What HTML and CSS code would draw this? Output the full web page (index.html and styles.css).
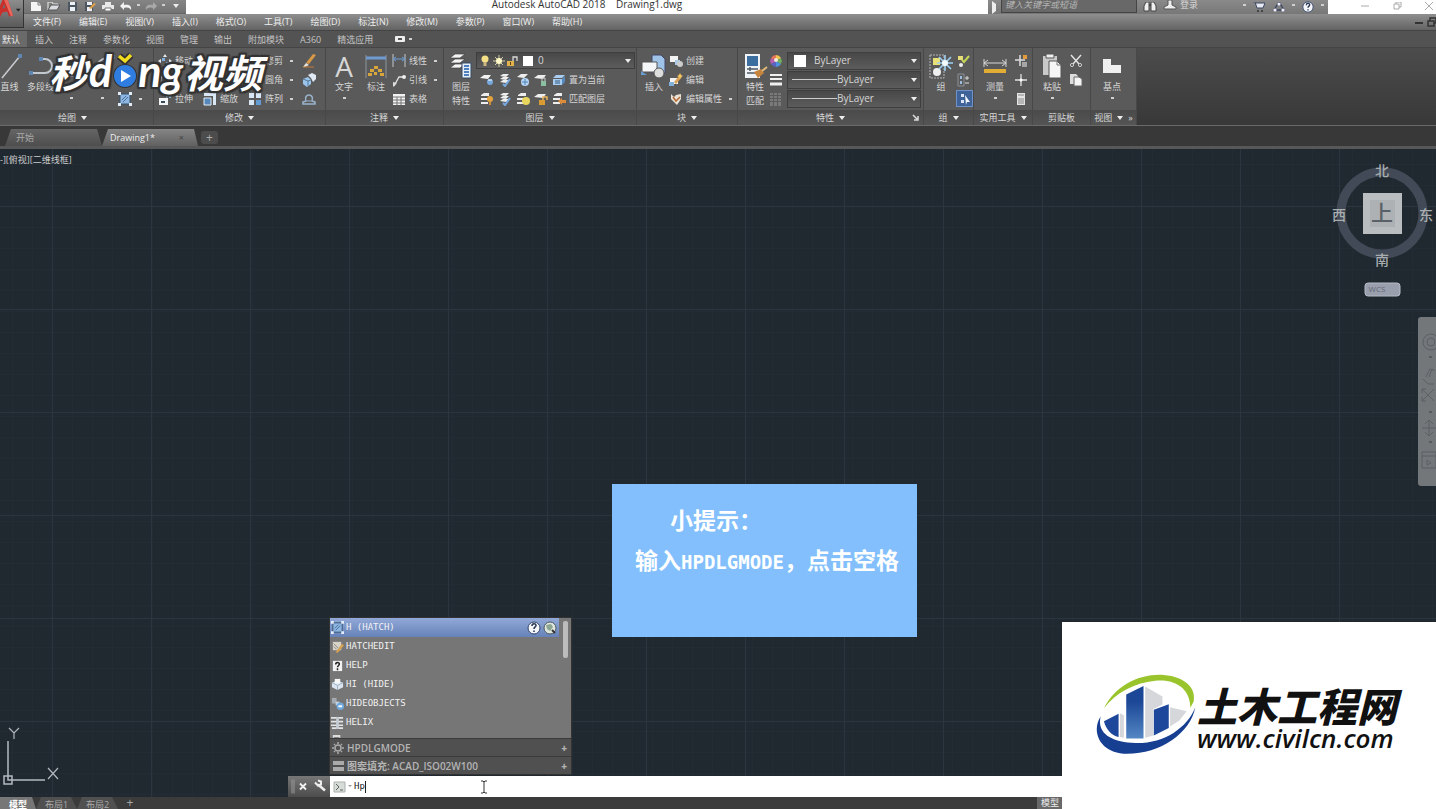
FILE: index.html
```
<!doctype html>
<html lang="zh-CN">
<head>
	<meta charset="utf-8">
	<title>Autodesk AutoCAD 2018</title>
	<link rel="stylesheet" href="styles.css">
</head>
<body>
	<svg class="symbols" aria-hidden="true">
		<symbol id="new" viewBox="0 0 14 10"><path d="M2 0h7l3 3v6H2z" fill="#f4f4f4"/><path d="M9 0v3h3" fill="none" stroke="#777"/></symbol>
		<symbol id="open" viewBox="0 0 14 10"><path d="M1 8V0h4l1 2h5v2" fill="none" stroke="#eee"/><path d="M1 8l3-5h9l-3 5z" fill="#d9dde2" stroke="#555"/></symbol>
		<symbol id="save" viewBox="0 0 14 10"><path d="M3 0h9v9H3z" fill="#4c5661"/><path d="M5 0h5v3H5zM5 5h5v4H5z" fill="#eef2f6"/></symbol>
		<symbol id="saveas" viewBox="0 0 14 10"><path d="M2 0h8v9H2z" fill="#4c5661"/><path d="M4 0h5v3H4zM4 5h5v4H4z" fill="#eef2f6"/><path d="M6 6l5-5 2 1-5 5z" fill="#e0a04a"/></symbol>
		<symbol id="print" viewBox="0 0 14 10"><path d="M4 0h6v3H4zM1 3h12v4H1z" fill="#e9e9e9"/><path d="M4 6h6v3H4z" fill="#fff" stroke="#777"/></symbol>
		<symbol id="undo" viewBox="0 0 14 10"><path d="M1 4l4-4v3c5-1 8 1 7 5-1-2-3-3-7-2v2z" fill="#f2f2f2"/></symbol>
		<symbol id="redo" viewBox="0 0 14 10"><path d="M13 4L9 0v3C4 2 1 4 2 8c1-2 3-3 7-2v2z" fill="#a9a9a9"/></symbol>
		<symbol id="line" viewBox="0 0 26 26"><path d="M5 25L23 3" stroke="#c9cdd1" stroke-width="1.5"/><path d="M21 1h4v4h-4z" fill="#5f86b3"/></symbol>
		<symbol id="pline" viewBox="0 0 26 26"><path d="M3 20h14a7 7 0 0 0 0-14h-4" fill="none" stroke="#c3c9d0" stroke-width="2"/><path d="M1 18h4v4H1zM11 4h4v4h-4z" fill="#5f86b3"/></symbol>
		<symbol id="circle" viewBox="0 0 26 26"><circle cx="13" cy="13" r="10" fill="none" stroke="#c3c9d0" stroke-width="2"/><path d="M11 11h4v4h-4z" fill="#5f86b3"/></symbol>
		<symbol id="arc" viewBox="0 0 26 26"><path d="M3 23C4 10 12 4 23 4" fill="none" stroke="#c3c9d0" stroke-width="2"/><path d="M1 21h4v4H1zM21 2h4v4h-4z" fill="#5f86b3"/></symbol>
		<symbol id="hatch" viewBox="0 0 14 14"><path d="M2 2h10v10H2z" fill="#8fb6e0" stroke="#33506f"/><path d="M0 0h3v3H0zM11 0h3v3h-3zM0 11h3v3H0zM11 11h3v3h-3z" fill="#e3edf8"/><path d="M4 8l4-4M5 10l5-5" stroke="#47729f"/></symbol>
		<symbol id="move" viewBox="0 0 14 14"><path d="M7 0l2 3H5zM7 14l2-3H5zM0 7l3-2v4zM14 7l-3-2v4z" fill="#e4eaf0"/><path d="M4 4h3v3H4zM8 8h3v3H8z" fill="#7eb0df"/></symbol>
		<symbol id="rotate" viewBox="0 0 14 14"><path d="M11 4a5 5 0 1 0 1 5" fill="none" stroke="#e4eaf0" stroke-width="2"/><path d="M8 4h5V0z" fill="#8db8e2"/></symbol>
		<symbol id="stretch" viewBox="0 0 14 14"><path d="M1 6h9v7H1z" fill="#f1f4f7"/><path d="M3 9h4v2H3z" fill="#394a5a"/><path d="M8 1h5v5h-2V4L8 6z" fill="#91badf"/></symbol>
		<symbol id="scale" viewBox="0 0 14 14"><path d="M1 1h12v12h-3V4H1z" fill="#d9e7f5"/><path d="M1 6h7v7H1z" fill="#5688bb" stroke="#e4edf6"/></symbol>
		<symbol id="array" viewBox="0 0 14 14"><path d="M1 1h5v5H1zM8 1h5v5H8zM1 8h5v5H1z" fill="#d8e7f6"/><path d="M8 8h5v5H8z" fill="#629bd3"/></symbol>
		<symbol id="erase" viewBox="0 0 14 14"><path d="M4 9l7-9 3 1-7 9z" fill="#d89845"/><path d="M4 9l3 2-4 2H1z" fill="#e8e4de"/><path d="M1 13h11" stroke="#c27b38"/></symbol>
		<symbol id="explode" viewBox="0 0 14 14"><path d="M1 6l5-2 3 3v4l-4 3-4-3z" fill="#9cc5ec"/><path d="M6 2l4-2 4 2v4l-3 3-2-4z" fill="#dfeaf5"/><path d="M1 6l5 2 3-1M6 8v5" fill="none" stroke="#54789a"/></symbol>
		<symbol id="offset" viewBox="0 0 14 14"><path d="M1 12h12v-2l-3-1c3-8-9-8-6 0l-3 1z" fill="none" stroke="#9bb5cf" stroke-width="1.5"/><path d="M5 9h4" stroke="#9bb5cf"/></symbol>
		<symbol id="dim" viewBox="0 0 26 26"><path d="M3 2v23M23 2v23" stroke="#8c969f"/><path d="M3 5h20" stroke="#6f9bd1" stroke-width="3"/><path d="M11 13h4v3h-4zM7 16h4v3H7zM15 16h4v3h-4zM5 20h4v3H5zM17 20h4v3h-4zM11 19h3v3h-3z" fill="#d9a63b"/></symbol>
		<symbol id="linear" viewBox="0 0 14 14"><path d="M1 0v13M13 0v13" stroke="#c3c9ce"/><path d="M1 5h12M4 3L1 5l3 2M10 3l3 2-3 2" fill="none" stroke="#6d9ed6"/></symbol>
		<symbol id="leader" viewBox="0 0 14 14"><path d="M2 13L7 4h4" fill="none" stroke="#e3e3e3" stroke-width="1.3"/><path d="M1 9l4 1-4 4z" fill="#ddd"/><circle cx="12" cy="4" r="2" fill="#eee"/></symbol>
		<symbol id="table" viewBox="0 0 14 14"><path d="M1 2h12v11H1z" fill="#f2f2f2"/><path d="M1 5h12M1 8h12M1 11h12M5 5v8M9 5v8" stroke="#777"/></symbol>
		<symbol id="layers" viewBox="0 0 26 26"><path d="M2 5l5-4h10l-5 4zM2 10l5-4h10l-5 4zM2 15l5-4h10l-5 4z" fill="#f4f4f4" stroke="#444" stroke-width=".7"/><path d="M14 10h9v15h-9z" fill="#e6effa" stroke="#374d65"/><path d="M16 13h5M16 16h5M16 19h5M16 22h5" stroke="#4d80bd" stroke-width="2"/></symbol>
		<symbol id="lay-a" viewBox="0 0 14 14"><path d="M0 5l4-3h7L8 6z" fill="#f2f2f2"/><circle cx="10" cy="9" r="3" fill="#76a8de"/><path d="M8 7h4" stroke="#fff"/></symbol>
		<symbol id="lay-b" viewBox="0 0 14 14"><path d="M2 3l3-2h6L8 4zM2 6l3-2h6L8 7zM2 9l3-2h6l-3 3z" fill="#eee"/><path d="M5 11l2 2 5-7" fill="none" stroke="#77a9e0" stroke-width="2"/></symbol>
		<symbol id="lay-c" viewBox="0 0 14 14"><path d="M1 4l4-3h7L8 5z" fill="#eee"/><circle cx="9" cy="9" r="4" fill="#b5d5f4"/><path d="M6 9h6M9 6v6" stroke="#4f81b6"/></symbol>
		<symbol id="lay-d" viewBox="0 0 14 14"><path d="M0 5l4-3h8L9 6z" fill="#eee"/><path d="M7 8h5v5H7z" fill="#8ac0a1"/><path d="M8 8V5h3v3" fill="none" stroke="#ccc"/></symbol>
		<symbol id="lay-e" viewBox="0 0 14 14"><path d="M1 5l3-3h9l-3 3zM1 6h9v6H1z" fill="#a9cdf1"/><path d="M10 6l3-3v6l-3 3z" fill="#5889bd"/><path d="M3 8h5M3 10h5" stroke="#35587c"/></symbol>
		<symbol id="lay-f" viewBox="0 0 14 14"><path d="M1 3l3-2h5v3H1zM1 6h7v2H1zM1 10h7v2H1z" fill="#eee"/><circle cx="10" cy="7" r="3" fill="#e3a43d"/><path d="M9 10h2v3H9z" fill="#c9893c"/></symbol>
		<symbol id="lay-g" viewBox="0 0 14 14"><path d="M2 3l3-2h5v3H2zM1 6h7v2H1zM1 10h7v2H1z" fill="#eee"/><circle cx="10" cy="9" r="4" fill="#e8d55d"/></symbol>
		<symbol id="lay-h" viewBox="0 0 14 14"><path d="M0 5l4-3h8L9 6z" fill="#eee"/><path d="M5 8h6v5H5z" fill="#d99b32"/><path d="M9 8V5h4v3" fill="none" stroke="#e9b35b" stroke-width="1.5"/></symbol>
		<symbol id="lay-i" viewBox="0 0 14 14"><path d="M2 3l3-2h5v3H2zM1 6h7v2H1zM1 10h7v2H1z" fill="#eee"/><path d="M6 9l4-3v2h4v3h-4v2z" fill="#dd8c3c"/></symbol>
		<symbol id="bulb" viewBox="0 0 14 14"><circle cx="7" cy="5" r="3.5" fill="#f5df87"/><path d="M5.500 8h3v4h-3z" fill="#ccb980"/></symbol>
		<symbol id="sun" viewBox="0 0 14 14"><path d="M7 1v12M1 7h12M3 3l8 8M11 3l-8 8" stroke="#d0cba0"/><circle cx="7" cy="7" r="3" fill="#fffac8"/></symbol>
		<symbol id="lock" viewBox="0 0 14 14"><path d="M1 7h7v5H1z" fill="#e3b34b"/><path d="M7 7V3h4v4" fill="none" stroke="#d8d8d8" stroke-width="1.3"/><path d="M4 8h1v3H4z" fill="#5c461b"/></symbol>
		<symbol id="insert" viewBox="0 0 26 26"><path d="M11 2h9l4 4v14H11z" fill="#9fc3e8" stroke="#446"/><path d="M1 9h15v10H1z" fill="#f5f6f7" stroke="#555"/><circle cx="18" cy="20" r="5" fill="#ddd" stroke="#555"/><path d="M0 18l6 4H0z" fill="#699dd1"/></symbol>
		<symbol id="create" viewBox="0 0 14 14"><path d="M1 2h8v6H1z" fill="#f3f3f3"/><path d="M6 6h5v5H6z" fill="#a9c9e7"/><circle cx="11" cy="10" r="3" fill="#ccc"/></symbol>
		<symbol id="edit" viewBox="0 0 14 14"><path d="M1 5h8v6H1z" fill="#f3f3f3"/><path d="M5 9l5-6 3 1-6 7z" fill="#d9a159"/><path d="M0 9h5v4H0z" fill="#83b0db"/><path d="M11 0l1 2 2 1-2 1-1 2-1-2-2-1 2-1z" fill="#f4c85e"/></symbol>
		<symbol id="attr" viewBox="0 0 14 14"><path d="M2 2l3 3 2-2 5-1v5l-4 6-6-6z" fill="#e9e2d5"/><path d="M4 5l3 4 4-4" fill="none" stroke="#b66d38" stroke-width="1.5"/></symbol>
		<symbol id="match" viewBox="0 0 26 26"><path d="M3 1h15v24H3z" fill="#f0f3f6"/><path d="M5 3h11v10H5z" fill="#3c6d9f"/><path d="M5 16h11M5 20h9M8 14v4" stroke="#4d5964" stroke-width="1.5"/><path d="M12 19l7-3 3 4-6 5z" fill="#c7843c"/><path d="M20 18l5-4" stroke="#e0bb78" stroke-width="2"/></symbol>
		<symbol id="wheel" viewBox="0 0 14 14"><path d="M7 7L2 4a6 6 0 0 1 5-3z" fill="#e57558"/><path d="M7 7V1a6 6 0 0 1 5 3z" fill="#f0c34d"/><path d="M7 7l5-3a6 6 0 0 1 0 6z" fill="#72b15b"/><path d="M7 7l5 3a6 6 0 0 1-5 3z" fill="#4e93dc"/><path d="M7 7v6a6 6 0 0 1-5-3z" fill="#5a63c2"/><path d="M7 7l-5 3a6 6 0 0 1 0-6z" fill="#b95fb0"/><circle cx="7" cy="6" r="2" fill="#f3e9e0"/></symbol>
		<symbol id="weights" viewBox="0 0 14 14"><path d="M1 2h12M1 6h12" stroke="#f0f0f0" stroke-width="2"/><path d="M1 11h12" stroke="#f0f0f0" stroke-width="3"/></symbol>
		<symbol id="types" viewBox="0 0 14 14"><path d="M1 2h12M1 5h12M1 8h12M1 11h12M1 13h12" stroke="#999" stroke-dasharray="3 1"/></symbol>
		<symbol id="group" viewBox="0 0 26 26"><path d="M2 2h14v23H2z" fill="none" stroke="#b6b6b6" stroke-dasharray="2 1"/><path d="M5 5h7v7H5z" fill="#e8df76"/><circle cx="9" cy="19" r="4" fill="#f0f0f0"/><path d="M17 2v16M9 10h16M11 4l12 12M23 4L11 16" stroke="#9ed0f4" stroke-width="1.6"/><circle cx="17" cy="10" r="3" fill="#f4fbff"/></symbol>
		<symbol id="ungroup" viewBox="0 0 14 14"><path d="M2 2h5v4H2z" fill="#e5dd78"/><circle cx="5" cy="11" r="2" fill="#eee"/><path d="M6 6l2 2 5-6" fill="none" stroke="#c6d756" stroke-width="2"/></symbol>
		<symbol id="gredit" viewBox="0 0 14 14"><path d="M2 1h6v12H2z" fill="none" stroke="#8b9196"/><path d="M4 3h2v3H4zM4 8h2v3H4z" fill="#9cbde0"/><path d="M9 5h4M11 3v4M9 10h4" stroke="#ddd"/></symbol>
		<symbol id="grsel" viewBox="0 0 14 14"><path d="M3 2h3v3H3zM3 8h3v3H3z" fill="#d9e6f7"/><path d="M7 3l5 7H9l-1 3z" fill="#f3f6fa"/></symbol>
		<symbol id="measure" viewBox="0 0 26 26"><path d="M2 6v8M24 6v8M2 10h22M6 7l-4 3 4 3M20 7l4 3-4 3" fill="none" stroke="#d6d6d6"/><path d="M2 16h22v4H2z" fill="#e1ad35"/></symbol>
		<symbol id="quick" viewBox="0 0 14 14"><path d="M6 1v11M1 6h10" stroke="#ddd" stroke-width="1.5"/><path d="M9 1h4v4H9z" fill="#e29b3e"/><path d="M8 8h5v5H8z" fill="#a6a6a6"/></symbol>
		<symbol id="point" viewBox="0 0 14 14"><path d="M7 1v12M1 7h12" stroke="#e0e0e0" stroke-width="1.3"/><circle cx="7" cy="7" r="1.5" fill="#fff"/></symbol>
		<symbol id="calc" viewBox="0 0 14 14"><path d="M3 1h8v12H3z" fill="#e3e3e3"/><path d="M4 3h6M4 7h6M4 9h6M4 11h6" stroke="#888"/></symbol>
		<symbol id="paste" viewBox="0 0 26 26"><path d="M4 3h14v19H4z" fill="#c9c9c9"/><path d="M7 1h8v4H7z" fill="#eee" stroke="#555"/><path d="M10 8h8l4 4v13H10z" fill="#f5f5f5" stroke="#555"/><path d="M18 8v4h4" fill="none" stroke="#777"/></symbol>
		<symbol id="cut" viewBox="0 0 14 14"><path d="M2 1l8 9M12 1l-8 9" stroke="#e5e5e5" stroke-width="1.4"/><circle cx="3" cy="11" r="1.6" fill="none" stroke="#ccc"/><circle cx="11" cy="11" r="1.6" fill="none" stroke="#ccc"/></symbol>
		<symbol id="copy" viewBox="0 0 14 14"><path d="M1 1h6l2 2v8H1z" fill="#ddd"/><path d="M5 4h5l3 2v7H5z" fill="#f5f5f5" stroke="#666"/></symbol>
		<symbol id="base" viewBox="0 0 26 26"><path d="M4 6h8v6h10v8H4z" fill="#f0f0f0"/></symbol>
		<symbol id="binoculars" viewBox="0 0 14 10"><path d="M3 0h3v9H1V4zM8 0h3l2 4v5H8z" fill="#f0f0f0" stroke="#444"/><path d="M6 3h2" stroke="#444" stroke-width="2"/></symbol>
		<symbol id="user" viewBox="0 0 14 10"><path d="M5 0h4v5l4 2v2H1V7l4-2z" fill="#eee" stroke="#555"/></symbol>
		<symbol id="cart" viewBox="0 0 14 10"><path d="M1 0h2l2 6h6l2-5H4" fill="#e6e9f1" stroke="#3d4561"/><circle cx="6" cy="9" r="1" fill="#333"/><circle cx="10" cy="9" r="1" fill="#333"/></symbol>
		<symbol id="share" viewBox="0 0 14 10"><path d="M7 0L2 8h10z" fill="none" stroke="#3d4561" stroke-width="1.4"/><circle cx="7" cy="2" r="1.6" fill="#eef"/><circle cx="3" cy="8" r="1.6" fill="#eef"/><circle cx="11" cy="8" r="1.6" fill="#eef"/></symbol>
		<symbol id="qmark" viewBox="0 0 14 14"><circle cx="7" cy="7" r="6" fill="#f4f6f9" stroke="#34466b"/><path d="M5 5c0-3 4-3 4-.5C9 6 7 6 7 8M7 9.500v1.500" fill="none" stroke="#2c3a57" stroke-width="1.6"/></symbol>
		<symbol id="web" viewBox="0 0 14 14"><circle cx="7" cy="7" r="6" fill="#dfe7dd" stroke="#4b5a66"/><path d="M3 4l5-1 2 3-3 4-3-2z" fill="#8da592"/><path d="M9 9l3 3" stroke="#333" stroke-width="2"/></symbol>
	</svg>

	<header class="titlebar">
		<div class="quick">
			<button aria-label="新建"><svg><use href="#new"/></svg></button>
			<button aria-label="打开"><svg><use href="#open"/></svg></button>
			<button aria-label="保存"><svg><use href="#save"/></svg></button>
			<button aria-label="另存为"><svg><use href="#saveas"/></svg></button>
			<button aria-label="打印"><svg><use href="#print"/></svg></button>
			<button aria-label="放弃"><svg><use href="#undo"/></svg></button>
			<i class="dot"></i>
			<button aria-label="重做"><svg><use href="#redo"/></svg></button>
			<i class="dot"></i>
			<i class="caret"></i>
		</div>
		<h1>Autodesk AutoCAD 2018 &nbsp;&nbsp; Drawing1.dwg</h1>
		<div class="info">
			<i class="caret side"></i>
			<input type="text" aria-label="搜索" placeholder="键入关键字或短语">
			<button aria-label="搜索"><svg><use href="#binoculars"/></svg></button>
			<button class="login"><svg><use href="#user"/></svg>登录</button>
			<i class="dot"></i>
			<button aria-label="应用商店"><svg><use href="#cart"/></svg></button>
			<button aria-label="保持连接"><svg><use href="#share"/></svg></button>
			<i class="dot"></i>
			<button class="help" aria-label="帮助"><svg><use href="#qmark"/></svg></button>
			<i class="dot"></i>
		</div>
		<div class="window-buttons">
			<button aria-label="最小化"><svg viewBox="0 0 10 10"><path d="M1 4h8" stroke="#aaa"/></svg></button>
			<button aria-label="还原"><svg viewBox="0 0 10 10"><path d="M2 2h5v5H2zM4 2V0h5v5H7" fill="none" stroke="#aaa"/></svg></button>
			<button aria-label="关闭"><svg viewBox="0 0 10 10"><path d="M1 0l8 8M9 0L1 8" stroke="#aaa"/></svg></button>
		</div>
	</header>
	<button class="app-button" aria-label="应用程序菜单">
		<svg viewBox="0 0 24 28"><path d="M-6 19L3-2h4l6 18-4 1-2-5-5 1-3 6z" fill="#c9302b"/><path d="M3-2l4 0 6 18-2 1z" fill="#e8685d"/><path d="M2 9l3-1-1-4z" fill="#6d6d6d"/><path d="M16 9h5l-2.500 3z" fill="#222"/></svg>
	</button>

	<nav class="menubar">
		<a href="#">文件(F)</a>
		<a href="#">编辑(E)</a>
		<a href="#">视图(V)</a>
		<a href="#">插入(I)</a>
		<a href="#">格式(O)</a>
		<a href="#">工具(T)</a>
		<a href="#">绘图(D)</a>
		<a href="#">标注(N)</a>
		<a href="#">修改(M)</a>
		<a href="#">参数(P)</a>
		<a href="#">窗口(W)</a>
		<a href="#">帮助(H)</a>
		<svg class="doc-buttons" viewBox="0 0 22 12"><path d="M1 7h8" stroke="#333" stroke-width="2"/><path d="M14 5h6v5h-6zM16 5V2h6v5h-2" fill="none" stroke="#333" stroke-width="1.500"/></svg>
	</nav>

	<nav class="ribbon-tabs">
		<a href="#" class="active">默认</a>
		<a href="#">插入</a>
		<a href="#">注释</a>
		<a href="#">参数化</a>
		<a href="#">视图</a>
		<a href="#">管理</a>
		<a href="#">输出</a>
		<a href="#">附加模块</a>
		<a href="#">A360</a>
		<a href="#">精选应用</a>
		<button aria-label="最小化功能区"><i class="cam"></i><i class="dot"></i></button>
	</nav>

	<section class="ribbon">
		<div class="panel draw">
			<div class="tools">
				<button class="big"><svg><use href="#line"/></svg>直线</button>
				<button class="big"><svg><use href="#pline"/></svg>多段线</button>
				<button class="big bare" aria-label="圆"><svg><use href="#circle"/></svg><i class="dot"></i></button>
				<button class="big bare" aria-label="圆弧"><svg><use href="#arc"/></svg><i class="dot"></i></button>
				<div class="col end">
					<button aria-label="图案填充"><svg><use href="#hatch"/></svg><i class="dot"></i></button>
				</div>
			</div>
			<button class="caption">绘图<i class="caret"></i></button>
		</div>
		<div class="panel modify">
			<div class="tools">
				<div class="col">
					<button>
						<svg><use href="#move"/></svg>移动</button>
					<button aria-label="旋转"><svg><use href="#rotate"/></svg></button>
					<button><svg><use href="#stretch"/></svg>拉伸</button>
				</div>
				<div class="col end">
					<button><svg><use href="#scale"/></svg>缩放</button>
				</div>
				<div class="col">
					<button><svg><use href="#cut"/></svg>修剪<i class="dot"></i></button>
					<button><svg><use href="#arc"/></svg>圆角<i class="dot"></i></button>
					<button><svg><use href="#array"/></svg>阵列<i class="dot"></i></button>
				</div>
				<div class="col">
					<button aria-label="删除"><svg><use href="#erase"/></svg></button>
					<button aria-label="分解"><svg><use href="#explode"/></svg></button>
					<button aria-label="偏移"><svg><use href="#offset"/></svg></button>
				</div>
			</div>
			<button class="caption">修改<i class="caret"></i></button>
		</div>
		<div class="panel annotate">
			<div class="tools">
				<button class="big"><span class="letter">A</span>文字<i class="dot"></i></button>
				<button class="big"><svg><use href="#dim"/></svg>标注</button>
				<div class="col">
					<button><svg><use href="#linear"/></svg>线性<i class="dot"></i></button>
					<button><svg><use href="#leader"/></svg>引线<i class="dot"></i></button>
					<button><svg><use href="#table"/></svg>表格</button>
				</div>
			</div>
			<button class="caption">注释<i class="caret"></i></button>
		</div>
		<div class="panel layer">
			<div class="tools">
				<button class="big"><svg><use href="#layers"/></svg>图层<br>特性</button>
				<div class="col">
					<div class="combo">
						<svg><use href="#bulb"/></svg>
						<svg><use href="#sun"/></svg>
						<svg><use href="#lock"/></svg>
						<i class="swatch"></i>
						<select aria-label="图层"><option>0</option></select>
						<i class="caret"></i>
					</div>
					<div class="row">
						<button aria-label="关"><svg><use href="#lay-a"/></svg></button>
						<button aria-label="隔离"><svg><use href="#lay-b"/></svg></button>
						<button aria-label="冻结"><svg><use href="#lay-c"/></svg></button>
						<button aria-label="锁定"><svg><use href="#lay-d"/></svg></button>
						<button><svg><use href="#lay-e"/></svg>置为当前</button>
					</div>
					<div class="row">
						<button aria-label="打开所有图层"><svg><use href="#lay-f"/></svg></button>
						<button aria-label="取消隔离"><svg><use href="#lay-b"/></svg></button>
						<button aria-label="解冻所有图层"><svg><use href="#lay-g"/></svg></button>
						<button aria-label="解锁"><svg><use href="#lay-h"/></svg></button>
						<button><svg><use href="#lay-i"/></svg>匹配图层</button>
					</div>
				</div>
			</div>
			<button class="caption">图层<i class="caret"></i></button>
		</div>
		<div class="panel block">
			<div class="tools">
				<button class="big"><svg><use href="#insert"/></svg>插入</button>
				<div class="col">
					<button><svg><use href="#create"/></svg>创建</button>
					<button><svg><use href="#edit"/></svg>编辑</button>
					<button><svg><use href="#attr"/></svg>编辑属性<i class="dot"></i></button>
				</div>
			</div>
			<button class="caption">块<i class="caret"></i></button>
		</div>
		<div class="panel props">
			<div class="tools">
				<button class="big"><svg><use href="#match"/></svg>特性<br>匹配</button>
				<div class="col">
					<div class="row"><svg><use href="#wheel"/></svg><div class="combo"><i class="swatch"></i><select aria-label="对象颜色"><option>ByLayer</option></select><i class="caret"></i></div></div>
					<div class="row"><svg><use href="#weights"/></svg><div class="combo"><i class="rule"></i><select aria-label="线宽"><option>ByLayer</option></select><i class="caret"></i></div></div>
					<div class="row"><svg><use href="#types"/></svg><div class="combo"><i class="rule"></i><select aria-label="线型"><option>ByLayer</option></select><i class="caret"></i></div></div>
				</div>
			</div>
			<button class="caption">特性<i class="caret"></i><svg class="launcher" viewBox="0 0 8 8"><path d="M1 1l4 4M6 2v4H2" fill="none" stroke="#ddd" stroke-width="1.500"/></svg></button>
		</div>
		<div class="panel groups">
			<div class="tools">
				<button class="big"><svg><use href="#group"/></svg>组</button>
				<div class="col">
					<button aria-label="解除编组"><svg><use href="#ungroup"/></svg></button>
					<button aria-label="组编辑"><svg><use href="#gredit"/></svg></button>
					<button class="pressed" aria-label="启用组选择"><svg><use href="#grsel"/></svg></button>
				</div>
			</div>
			<button class="caption">组<i class="caret"></i></button>
		</div>
		<div class="panel utils">
			<div class="tools">
				<button class="big"><svg><use href="#measure"/></svg>测量<i class="dot"></i></button>
				<div class="col">
					<button aria-label="快速选择"><svg><use href="#quick"/></svg></button>
					<button aria-label="点"><svg><use href="#point"/></svg></button>
					<button aria-label="计算器"><svg><use href="#calc"/></svg></button>
				</div>
			</div>
			<button class="caption">实用工具<i class="caret"></i></button>
		</div>
		<div class="panel clip">
			<div class="tools">
				<button class="big"><svg><use href="#paste"/></svg>粘贴<i class="dot"></i></button>
				<div class="col">
					<button aria-label="剪切"><svg><use href="#cut"/></svg></button>
					<button aria-label="复制"><svg><use href="#copy"/></svg></button>
				</div>
			</div>
			<button class="caption">剪贴板</button>
		</div>
		<div class="panel view">
			<div class="tools">
				<button class="big"><svg><use href="#base"/></svg>基点<i class="dot"></i></button>
			</div>
			<button class="caption">视图<i class="caret"></i><span>»</span></button>
		</div>
	</section>

	<nav class="file-tabs">
		<a href="#">开始</a>
		<a href="#" class="active">Drawing1*<span>×</span></a>
		<button aria-label="新图形">+</button>
	</nav>

	<main class="canvas">
		<p class="view-label">-][俯视][二维线框]</p>

		<svg class="view-cube" viewBox="0 0 108 150">
			<circle cx="54" cy="64" r="41" fill="none" stroke="#414a56" stroke-width="9"/>
			<path d="M35 44h39v41H35z" fill="#b9bdbf"/>
			<path d="M42 51h25v27H42z" fill="#adb1b4"/>
			<text x="54" y="72" class="face">上</text>
			<text x="54" y="27">北</text>
			<text x="11" y="71">西</text>
			<text x="98" y="71">东</text>
			<text x="54" y="116">南</text>
			<rect x="37" y="134" width="35" height="13" rx="3" fill="#9a9fad" stroke="#b7bbc6"/>
			<text x="49" y="143" class="wcs">WCS</text>
		</svg>

		<svg class="nav-bar" viewBox="0 0 18 169">
			<g fill="none" stroke="#5c6166">
				<circle cx="13" cy="25" r="8"/><circle cx="13" cy="25" r="4"/>
				<path d="M5 62l5 5h6M8 60l4-8 3 1M11 60l3-8 3 2"/>
				<path d="M4 72l12 12M16 72L4 84M4 76v-4h4M4 80v4h4"/>
				<path d="M4 111h14M11 103v16M7 107l4-4 4 4M7 115l4 4 4-4"/>
				<path d="M4 135h14v16H4zM4 139h14M9 143v5l4-2z"/>
			</g>
			<path d="M11 40h3M11 95h3M11 125h3" stroke="#565b5f" stroke-width="2"/>
		</svg>

		<aside class="hint">
			<h2>小提示：</h2>
			<p>输入<span>HPDLGMODE</span>，点击空格</p>
		</aside>

		<svg class="ucs" viewBox="0 0 64 62">
			<path d="M8 16v39h37M4 51h8v8H4z" fill="none" stroke="#b3b9be" stroke-width="1.500"/>
			<path d="M9 3l5 5 5-5M14 8v6M48 43l10 11M58 43L48 54" fill="none" stroke="#b3b9be" stroke-width="1.200"/>
		</svg>

		<div class="suggest">
			<ul>
				<li class="selected"><svg><use href="#hatch"/></svg>H (HATCH)<svg class="right"><use href="#qmark"/></svg><svg><use href="#web"/></svg></li>
				<li><svg viewBox="0 0 14 14"><path d="M2 2h9v9H2z" fill="#d7d2c5"/><path d="M5 13l7-9 2 2-7 8z" fill="#d5a153"/><path d="M3 4l5 5M3 7l3 3" stroke="#888"/></svg>HATCHEDIT</li>
				<li><svg viewBox="0 0 14 14"><path d="M2 2h10v11H2z" fill="#f2f2f2"/><path d="M5 6c0-3 4-3 4-.5C9 7 7 7 7 9M7 10v2" fill="none" stroke="#222" stroke-width="1.600"/></svg>HELP</li>
				<li><svg viewBox="0 0 14 14"><path d="M1 5l5-2 7 2v5l-6 3-6-3z" fill="#dbe5ef"/><path d="M4 1h6v5H4z" fill="#f5f7f9"/><path d="M1 5l6 3 6-3M7 8v5" fill="none" stroke="#9db0c3"/></svg>HI (HIDE)</li>
				<li><svg viewBox="0 0 14 14"><path d="M1 1h5v6H1z" fill="#a5abb1"/><path d="M5 5h4v4H5z" fill="#c6d4e2"/><circle cx="10" cy="10" r="4" fill="#6fa9dd"/><path d="M8 10h4" stroke="#fff" stroke-width="2"/></svg>HIDEOBJECTS</li>
				<li><svg viewBox="0 0 14 14"><path d="M0 2h13M0 6h13M0 10h13M1 13h12" stroke="#e4e4e4" stroke-width="1.800"/><path d="M7 1v13" stroke="#c5ccd4" stroke-width="3"/></svg>HELIX</li>
				<li><svg viewBox="0 0 14 14"><path d="M2 0h8v9H2z" fill="#ddd"/><path d="M3 3h6" stroke="#555"/></svg></li>
			</ul>
			<i class="thumb"></i>
			<button class="group-row"><svg viewBox="0 0 14 14"><circle cx="7" cy="7" r="3" fill="none" stroke="#aaa" stroke-width="1.500"/><path d="M7 1v2M7 11v2M1 7h2M11 7h2M3 3l1 1M10 10l1 1M11 3l-1 1M4 10l-1 1" stroke="#aaa" stroke-width="1.500"/></svg>HPDLGMODE<b>+</b></button>
			<button class="group-row"><svg viewBox="0 0 14 14"><path d="M2 2h11v4H2zM2 8h11v4H2z" fill="#aaa"/></svg>图案填充: ACAD_ISO02W100<b>+</b></button>
		</div>

		<form class="command">
			<div class="grip">
				<svg viewBox="0 0 42 20"><path d="M4 3v14M6 3v14" stroke="#999"/><path d="M12 7l6 6M18 7l-6 6" stroke="#f1f1f1" stroke-width="1.800"/><path d="M30 8l7 6" stroke="#eee" stroke-width="2.500"/><path d="M27 6l3 3 3-1V5l-3-1" fill="none" stroke="#eee" stroke-width="2"/></svg>
			</div>
			<svg class="prompt" viewBox="0 0 24 20"><path d="M4 5h11v10H4z" fill="#d7dcd8" stroke="#aab0ac"/><path d="M6 7l3 3-3 3M10 13h3" fill="none" stroke="#5a625d"/><path d="M18 8h4l-2 2z" fill="#999"/></svg>
			<input type="text" aria-label="命令" value="Hp">
			<i class="text-caret"></i>
			<svg class="ibeam" viewBox="0 0 8 14"><path d="M1 1h2l1 1 1-1h2M4 2v10M1 13h2l1-1 1 1h2" fill="none" stroke="#333"/></svg>
		</form>
	</main>

	<footer class="layout-tabs">
		<a href="#" class="active">模型</a>
		<a href="#">布局1</a>
		<a href="#">布局2</a>
		<button aria-label="新建布局">+</button>
		<button class="space">模型</button>
	</footer>

	<div class="watermark">
		<span>秒</span><span class="latin">d</span>
		<svg viewBox="0 0 24 36"><path d="M6 3l6 5 6-6" fill="none" stroke="#333" stroke-width="7"/><circle cx="12" cy="23" r="12" fill="#333"/><path d="M6 3l6 5 6-6" fill="none" stroke="#f2dc20" stroke-width="3.500"/><circle cx="12" cy="23" r="11" fill="#2f7de0"/><path d="M8 17l10 6-10 6z" fill="#fff"/></svg>
		<span class="latin">ng</span><span>视频</span>
	</div>

	<div class="brand">
		<svg viewBox="100 160 310 245">
			<defs>
				<linearGradient id="tower" x1="0" y1="0" x2="0" y2="1"><stop offset=".3" stop-color="#1c4796"/><stop offset="1" stop-color="#5487c4"/></linearGradient>
			</defs>
			<path d="M130 265C165 195 240 160 310 165C375 170 408 205 400 245L390 264C390 210 350 178 290 182C220 188 165 220 130 265z" fill="#9ac42c"/>
			<path d="M120 290C90 335 118 402 200 402C300 402 390 340 405 262C380 325 310 372 225 370C150 368 108 340 120 290z" fill="#173f91"/>
			<path d="M254 200l52 30v24l-28 14v80l-24 6zM329 262l50 12-22 28-28 18z" fill="#d5d7db"/>
			<path d="M197 224l52-26v158h-52z" fill="url(#tower)"/>
			<path d="M130 304l44-22v70c-22-6-38-24-44-48zM280 270l45-17v72l-45 22z" fill="#1d479a"/>
			<path d="M178 280l12 6v68l-12-2z" fill="#d5d7db"/>
		</svg>
		<div>
			<strong>土木工程网</strong>
			<a href="#">www.civilcn.com</a>
		</div>
	</div>
</body>
</html>
```
FILE: styles.css
```
* {
	box-sizing: border-box;
}

html, body {
	height: 100%;
	margin: 0;
	overflow: hidden;
}

body {
	position: relative;
	display: flex;
	flex-direction: column;
	background: #383838;
	color: #d6d6d6;
	font: 9px/12px "Open Sans", "Noto Sans CJK SC", sans-serif;
}

.symbols {
	display: none;
}

h1, h2, p, ul {
	margin: 0;
	padding: 0;
}

a {
	color: inherit;
	text-decoration: none;
}

button, input, select {
	margin: 0;
	padding: 0;
	border: 0;
	background: none;
	color: inherit;
	font: inherit;
}

svg {
	flex: none;
	width: 14px;
	height: 14px;
}

.dot {
	flex: none;
	width: 3px;
	height: 2px;
	background: #d0d0d0;
}

.caret {
	flex: none;
	border: 3px solid transparent;
	border-top: 4px solid #eee;
	border-bottom: 0;
}

/* title bar */

.titlebar {
	flex: none;
	display: flex;
	height: 14px;
	background: white;
}

.titlebar svg {
	display: block;
	height: 10px;
}

.quick {
	display: flex;
	gap: 4px;
	width: 186px;
	padding-left: 29px;
	background: linear-gradient(#858585, #737373);
	border-bottom: 1px solid #666;
}

.quick .dot, .quick .caret, .info .dot, .info .caret {
	margin-top: 4px;
}

.quick .caret {
	margin-left: 4px;
}

.titlebar h1 {
	flex: 1;
	color: #333;
	font-size: 10px;
	font-weight: normal;
	line-height: 9px;
	text-align: center;
}

.info {
	display: flex;
	gap: 6px;
	width: 340px;
	padding-right: 4px;
	background: linear-gradient(#8a8a8a, #777);
}

.info .side {
	border: 3px solid transparent;
	border-left: 4px solid #eee;
	border-right: 0;
	margin: 1px 1px 0 4px;
}

.info input {
	width: 136px;
	height: 13px;
	margin-left: -2px;
	padding: 0 3px 4px;
	background: #686868;
	border: 1px solid #444;
	border-top: 0;
	font-style: italic;
}

.info input::placeholder {
	color: #b5b5b5;
}

.login {
	display: flex;
	flex: 1;
	gap: 3px;
	line-height: 10px;
}

.titlebar .help svg {
	height: 12px;
}

.window-buttons {
	display: flex;
	justify-content: space-between;
	width: 108px;
	padding-left: 30px;
}

/* the logo button hangs over the title bar and the menu bar */
.app-button {
	position: absolute;
	top: 0;
	left: 0;
	width: 24px;
	height: 28px;
	background: linear-gradient(#8d8d8d, #5a5a5a);
	border-right: 1px solid #333;
	border-bottom: 1px solid #333;
}

.app-button svg {
	display: block;
	width: 24px;
	height: 27px;
}

.menubar {
	flex: none;
	display: flex;
	align-items: center;
	gap: 18px;
	height: 17px;
	padding-left: 33px;
	background: linear-gradient(#8f8f8f, #636363);
	border-bottom: 1px solid #444;
	color: #eee;
	line-height: 16px;
}

.doc-buttons {
	width: 22px;
	height: 12px;
	margin-left: auto;
}

/* ribbon */

.ribbon-tabs {
	flex: none;
	display: flex;
	align-items: stretch;
	height: 16px;
	background: #535353;
	color: #c4c4c4;
	line-height: 17px;
}

.ribbon-tabs a {
	padding: 0 8px;
}

.ribbon-tabs .active {
	width: 27px;
	padding: 0 2px;
	background: #6a6a6a;
	color: #eee;
}

.ribbon-tabs button {
	display: flex;
	align-items: center;
	gap: 4px;
	padding-left: 14px;
}

.cam {
	width: 10px;
	height: 6px;
	border: solid #eee;
	border-width: 2px 3px;
	border-radius: 1px;
}

.ribbon {
	flex: none;
	display: flex;
	height: 79px;
	background: linear-gradient(#4c4c4c, #383838);
	border-bottom: 1px solid #6a6a6a;
	border-top: 1px solid #444;
}

.panel {
	display: flex;
	flex-direction: column;
	background: #5a5a5a;
	border-right: 1px solid #484848;
}

.draw { width: 154px; }
.modify { width: 172px; }
.annotate { width: 118px; }
.layer { width: 193px; }
.block { width: 101px; }
.props { width: 186px; }
.groups { width: 50px; }
.utils { width: 59px; }
.clip { width: 58px; }
.view { width: 46px; }

.tools {
	flex: 1;
	display: flex;
	min-height: 0;
	padding: 5px 2px 0;
}

.tools button {
	display: flex;
	align-items: center;
	gap: 3px;
	height: 19px;
	line-height: 14px;
	white-space: nowrap;
}

.tools .big {
	flex: none;
	flex-direction: column;
	width: 30px;
	height: 57px;
	gap: 1px;
}

.big svg {
	width: 26px;
	height: 26px;
}

.big .dot {
	margin-top: 2px;
}

.bare .dot {
	margin-top: 17px;
}

.letter {
	height: 26px;
	font-size: 28px;
	line-height: 26px;
}

.col {
	flex: 1;
	display: flex;
	flex-direction: column;
	margin-top: -2px;
}

.end {
	justify-content: flex-end;
	margin-bottom: 2px;
}

.col button .dot {
	margin-left: 4px;
}

.row {
	display: flex;
	align-items: center;
	gap: 4px;
	height: 19px;
}

.caption {
	position: relative;
	flex: none;
	display: flex;
	align-items: center;
	justify-content: center;
	gap: 5px;
	height: 15px;
	background: linear-gradient(#4a4a4a, #555);
}

.launcher {
	position: absolute;
	right: 3px;
	width: 8px;
	height: 8px;
}

.draw .tools {
	padding-left: 0;
	margin-left: -6px;
}

.draw .big {
	width: 31px;
}

.draw .caption {
	padding-right: 8px;
}

.modify .tools {
	padding-left: 4px;
}

.modify .col {
	flex: none;
	width: 45px;
}

.modify .col:nth-child(3) {
	width: 54px;
}

.annotate .big {
	width: 32px;
}

.combo {
	display: flex;
	align-items: center;
	height: 17px;
	margin: 1px 0;
	padding: 0 3px;
	background: linear-gradient(#484848, #5c5c5c);
	border: 1px solid #3e3e3e;
}

.combo select {
	flex: 1;
	width: 40px;
	appearance: none;
	font-size: 10px;
	line-height: 13px;
}

.swatch {
	width: 10px;
	height: 10px;
	background: white;
}

.layer .combo {
	width: 159px;
	padding-left: 1px;
}

.layer .swatch {
	margin: 0 5px 0 3px;
}

.layer .row {
	padding-left: 4px;
}

.props .tools .col {
	margin-left: -1px;
}

.props .combo {
	flex: 1;
	height: 18px;
}

.props .swatch {
	width: 12px;
	height: 12px;
	margin: 0 8px 0 3px;
}

.rule {
	width: 45px;
	height: 1px;
	margin-left: 1px;
	background: #ccc;
}

.groups .big {
	width: 30px;
}

.clip .big {
	width: 34px;
}

.utils .big {
	width: 38px;
}

.view .tools {
	padding-left: 6px;
}

.tools .pressed {
	width: 17px;
	height: 17px;
	justify-content: center;
	margin-top: 1px;
	background: #3f6299;
	border: 1px solid #6f93c8;
}

/* drawing tabs */

.file-tabs {
	flex: none;
	display: flex;
	align-items: flex-end;
	height: 23px;
	padding-left: 5px;
	border-bottom: 3px solid #575757;
	color: #aaa;
}

.file-tabs a {
	width: 97px;
	height: 17px;
	padding-left: 11px;
	background: linear-gradient(#656565, #4e4e4e);
	clip-path: polygon(0 100%, 6px 0, 92px 0, 100% 100%);
	font-size: 9px;
	line-height: 17px;
}

.file-tabs .active {
	display: flex;
	width: 96px;
	padding: 0 14px 0 8px;
	background: linear-gradient(#858585, #616161);
	color: #eee;
}

.file-tabs span {
	margin-left: auto;
	color: #444;
}

.file-tabs button {
	width: 17px;
	height: 13px;
	margin: 0 3px 2px;
	background: #4c4c4c;
	border-radius: 3px;
	font-size: 12px;
	line-height: 12px;
}

/* model space */

.canvas {
	position: relative;
	flex: 1;
	overflow: hidden;
	background-color: #202830;
	background-image:
		linear-gradient(90deg, #2a353f 1px, transparent 1px),
		linear-gradient(#2a353f 1px, transparent 1px),
		repeating-linear-gradient(90deg, #232c34 0 1px, transparent 1px 20px),
		repeating-linear-gradient(#232c34 0 1px, transparent 1px 21px);
	background-size: 99px 99px, 103px 103px, auto, auto;
	background-position: 52px 0, 0 57px, 12px 0, 0 15px;
	background-repeat: repeat;
}

.view-label {
	margin-top: 5px;
	color: #ccc;
}

.view-cube {
	position: absolute;
	top: 0;
	right: 0;
	width: 108px;
	height: 150px;
	fill: #a9adaf;
	font-size: 14px;
	font-weight: 500;
	text-anchor: middle;
}

.view-cube .face {
	fill: #5a6067;
	font-size: 22px;
}

.view-cube .wcs {
	fill: #646976;
	font-size: 8px;
}

.nav-bar {
	position: absolute;
	top: 168px;
	right: 0;
	width: 18px;
	height: 169px;
	background: #73777a;
	border-radius: 3px 0 0 3px;
}

.hint {
	position: absolute;
	top: 335px;
	left: 612px;
	width: 305px;
	height: 153px;
	padding: 15px 0 0 23px;
	background: #82bffc;
	color: white;
	font: bold 23px/40px "Noto Sans CJK SC", sans-serif;
	white-space: nowrap;
}

.hint h2 {
	padding-left: 35px;
	font: inherit;
}

.hint span {
	font-family: "DejaVu Sans Mono", monospace;
	font-size: 19px;
}

.ucs {
	position: absolute;
	left: 0;
	bottom: 10px;
	width: 64px;
	height: 62px;
}

.suggest {
	position: absolute;
	left: 329px;
	bottom: 22px;
	width: 243px;
	border: 1px solid #333;
	background: #3a3a3a;
}

.suggest ul {
	height: 120px;
	overflow: hidden;
	background: #767676;
	color: #f2f2f2;
	font: 9px/21px "DejaVu Sans Mono", monospace;
	list-style: none;
}

.suggest li {
	display: flex;
	align-items: center;
	gap: 2px;
	height: 19px;
	padding-left: 1px;
}

.suggest li > svg:first-child {
	width: 13px;
	height: 13px;
}

.suggest .selected {
	width: 229px;
	padding-right: 2px;
	background: linear-gradient(#92a9d8, #6682b8);
}

.suggest .right {
	margin-left: auto;
}

.thumb {
	position: absolute;
	top: 3px;
	right: 3px;
	width: 5px;
	height: 37px;
	background: #bcbcbc;
	border-radius: 2px;
}

.group-row {
	display: flex;
	align-items: center;
	gap: 2px;
	width: 100%;
	height: 17px;
	margin-top: 1px;
	padding: 0 4px 0 1px;
	background: #505050;
	color: #b4b4b4;
	font-size: 10px;
	font-weight: 600;
}

.group-row b {
	margin-left: auto;
}

.command {
	position: absolute;
	left: 288px;
	right: 0;
	bottom: 0;
	display: flex;
	align-items: center;
	height: 21px;
	background: white;
}

.grip, .grip svg {
	width: 42px;
	height: 21px;
	background: linear-gradient(#777, #4c4c4c);
}

.prompt {
	width: 24px;
	height: 20px;
}

.command input {
	width: 11px;
	color: #222;
	font: 9px/19px "DejaVu Sans Mono", monospace;
	outline: 0;
}

.text-caret {
	width: 1px;
	height: 12px;
	background: #222;
}

.ibeam {
	width: 8px;
	margin-left: 114px;
}

.layout-tabs {
	flex: none;
	display: flex;
	height: 12px;
	background: #3b3b3b;
	color: #aaa;
	line-height: 15px;
}

.layout-tabs a {
	width: 41px;
	padding-left: 9px;
	background: #505050;
	clip-path: polygon(5px 0, 35px 0, 100% 100%, 0 100%);
}

.layout-tabs .active {
	width: 36px;
	background: #777;
	color: white;
	font-weight: bold;
	clip-path: polygon(0 0, 32px 0, 100% 100%, 0 100%);
}

.layout-tabs button {
	width: 24px;
	font-size: 12px;
	line-height: 12px;
}

/* keeps clear of the brand block on the right */
.layout-tabs .space {
	width: 26px;
	margin: 0 373px 0 auto;
	background: #686868;
	color: #eee;
	font-size: 9px;
}

.watermark {
	position: absolute;
	top: 48px;
	left: 49px;
	display: flex;
	align-items: center;
	gap: 1px;
	height: 46px;
	color: white;
	font: italic bold 39px/46px "Noto Sans CJK SC", sans-serif;
	text-shadow: 2px 0 1px #333, -2px 0 1px #333, 0 2px 1px #333, 0 -2px 1px #333, 2px 2px 1px #333, -2px -2px 1px #333, 2px -2px 1px #333, -2px 2px 1px #333;
}

.watermark .latin {
	font-family: Lato, sans-serif;
	font-size: 43px;
}

.watermark svg {
	width: 24px;
	height: 36px;
}

.brand {
	position: absolute;
	right: 0;
	bottom: 0;
	display: flex;
	width: 374px;
	height: 187px;
	padding: 51px 0 0 32px;
	background: white;
	color: #111;
}

.brand svg {
	width: 103px;
	height: 82px;
}

.brand strong {
	display: block;
	margin-top: 12px;
	font: italic 900 40px/40px "Noto Sans CJK SC", sans-serif;
}

.brand a {
	display: block;
	font: italic 600 26px/26px "Open Sans", sans-serif;
}
```
